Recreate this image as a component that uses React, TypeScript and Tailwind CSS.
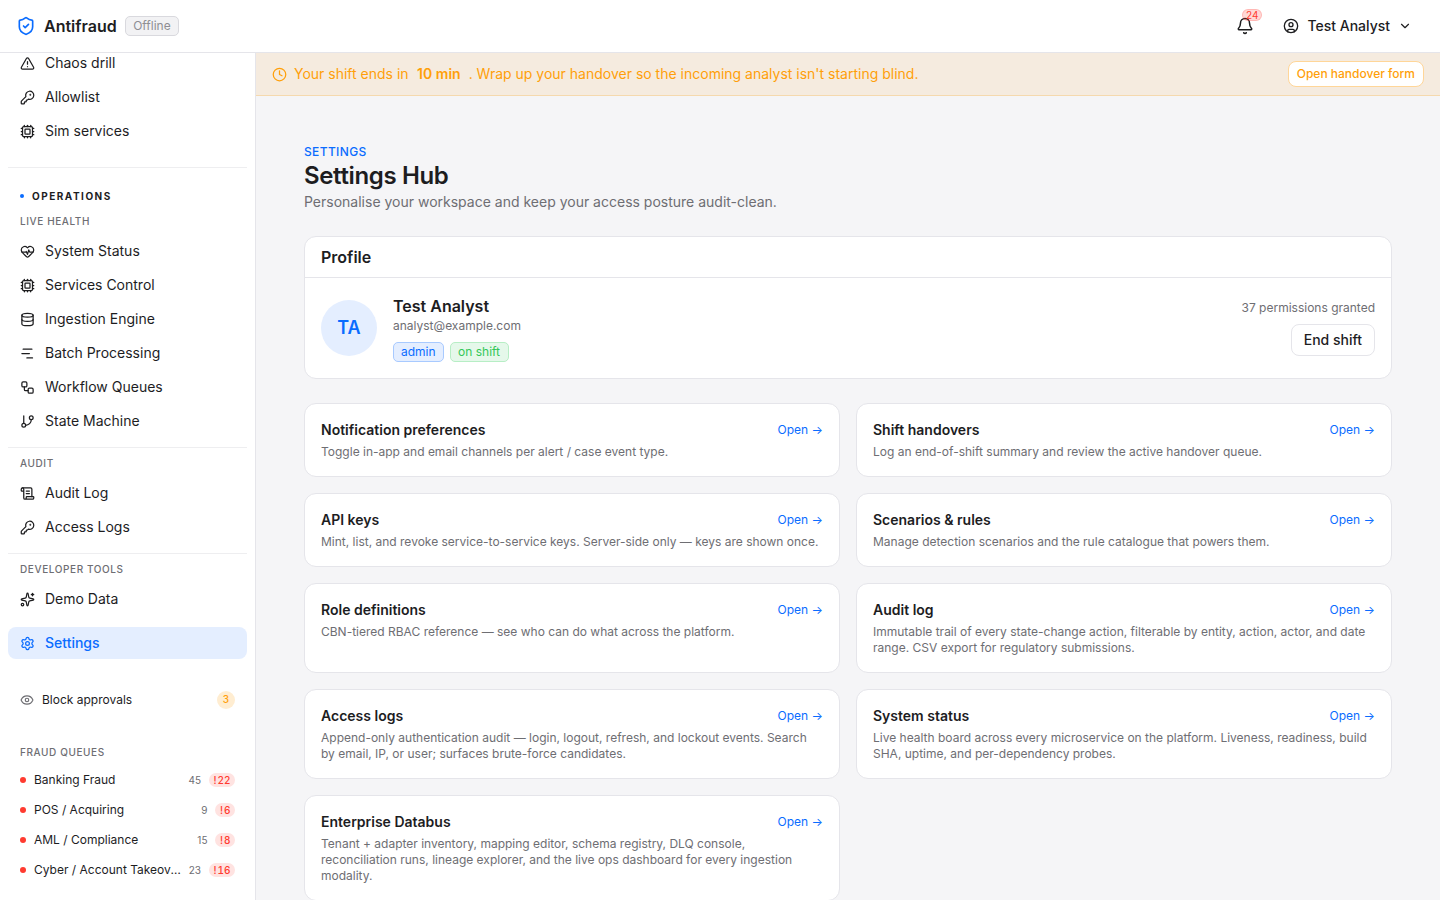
import {
  Bell,
  ChevronDown,
  CircleUser,
  Clock,
  Cpu,
  Database,
  Eye,
  GitBranch,
  HeartPulse,
  KeyRound,
  ScrollText,
  Settings,
  ShieldCheck,
  Sparkles,
  TriangleAlert,
  Workflow,
} from "lucide-react";
import type { ReactNode } from "react";

function NavItem({ icon, label }: { icon: ReactNode; label: string }) {
  return (
    <div className="flex h-[34px] items-center gap-[10px] px-3 text-sm text-[#1d1d1f]">
      <span className="flex w-[15px] justify-center text-[#1d1d1f]">{icon}</span>
      <span>{label}</span>
    </div>
  );
}

function BatchIcon() {
  return (
    <svg width="15" height="15" viewBox="0 0 24 24" fill="none" stroke="currentColor" strokeWidth="2" strokeLinecap="round">
      <path d="M5 5h14" />
      <path d="M3 12h12" />
      <path d="M11 19h9" />
    </svg>
  );
}

function GroupLabel({ children }: { children: ReactNode }) {
  return (
    <div className="px-3 text-[10px] font-medium uppercase leading-[14px] tracking-[0.06em] text-[#6e6e73]">
      {children}
    </div>
  );
}

function Queue({ name, total, hot }: { name: string; total: number; hot: number }) {
  return (
    <div className="flex h-[30px] items-center px-3">
      <span className="h-[6px] w-[6px] shrink-0 rounded-full bg-[#ff3b30]" />
      <span className="ml-2 min-w-0 flex-1 truncate text-xs text-[#1d1d1f]">{name}</span>
      <span className="ml-[7px] text-[10px] text-[#6e6e73]">{total}</span>
      <span className="ml-2 rounded-full bg-[#ffe3e1] px-[4.5px] text-[10px] font-medium leading-[14px] tabular-nums text-[#ff3b30]">
        <span className="mr-[1px]">!</span>
        {hot}
      </span>
    </div>
  );
}

function Sidebar() {
  return (
    <aside className="w-[256px] shrink-0 overflow-hidden border-r border-[#e5e5ea] bg-white">
      <div className="-mt-[7px] px-2">
        <NavItem icon={<TriangleAlert size={15} />} label="Chaos drill" />
        <NavItem icon={<KeyRound size={15} />} label="Allowlist" />
        <NavItem icon={<Cpu size={15} />} label="Sim services" />
        <div className="mt-[19px] border-t border-[#eeeef0]" />
        <div className="mt-[21px] flex items-center gap-2 px-3 text-[10px] font-bold leading-[14px] tracking-[0.15em] text-[#1d1d1f]">
          <span className="h-1 w-1 rounded-full bg-[#0a6cff]" />
          OPERATIONS
        </div>
        <div className="mt-[11px]">
          <GroupLabel>Live health</GroupLabel>
        </div>
        <div className="mt-[6px]">
          <NavItem icon={<HeartPulse size={15} />} label="System Status" />
          <NavItem icon={<Cpu size={15} />} label="Services Control" />
          <NavItem icon={<Database size={15} />} label="Ingestion Engine" />
          <NavItem icon={<BatchIcon />} label="Batch Processing" />
          <NavItem icon={<Workflow size={15} />} label="Workflow Queues" />
          <NavItem icon={<GitBranch size={15} />} label="State Machine" />
        </div>
        <div className="mt-[9px] border-t border-[#eeeef0]" />
        <div className="mt-2">
          <GroupLabel>Audit</GroupLabel>
        </div>
        <div className="mt-[6px]">
          <NavItem icon={<ScrollText size={15} />} label="Audit Log" />
          <NavItem icon={<KeyRound size={15} />} label="Access Logs" />
        </div>
        <div className="mt-[9px] border-t border-[#eeeef0]" />
        <div className="mt-2">
          <GroupLabel>Developer tools</GroupLabel>
        </div>
        <div className="mt-[6px]">
          <NavItem icon={<Sparkles size={15} />} label="Demo Data" />
        </div>
        <div className="mt-[11px] flex h-8 items-center gap-[10px] rounded-lg bg-[#e4eeff] px-3 text-sm font-medium text-[#0a6cff]">
          <Settings size={15} />
          Settings
        </div>
        <div className="mt-8 flex h-[18px] items-center gap-2 px-3 text-xs text-[#1d1d1f]">
          <Eye size={14} className="text-[#6e6e73]" />
          <span className="flex-1">Block approvals</span>
          <span className="flex h-[18px] w-[18px] items-center justify-center rounded-full bg-[#ffedd1] text-[10px] font-medium text-[#ff9f0a]">
            3
          </span>
        </div>
        <div className="mt-9">
          <GroupLabel>Fraud queues</GroupLabel>
        </div>
        <div className="mt-[6px]">
          <Queue name="Banking Fraud" total={45} hot={22} />
          <Queue name="POS / Acquiring" total={9} hot={6} />
          <Queue name="AML / Compliance" total={15} hot={8} />
          <Queue name="Cyber / Account Takeover" total={23} hot={16} />
        </div>
      </div>
    </aside>
  );
}

function HubCard({ title, body }: { title: string; body: string }) {
  return (
    <div className="rounded-xl border border-[#e5e5ea] bg-white p-4">
      <div className="flex items-center justify-between">
        <div className="text-sm font-semibold text-[#1d1d1f]">{title}</div>
        <div className="text-xs text-[#0a6cff]">Open →</div>
      </div>
      <p className="mt-1 text-xs text-[#6e6e73]">{body}</p>
    </div>
  );
}

export default function App() {
  return (
    <div className="flex h-screen flex-col overflow-hidden bg-[#f5f5f7] font-['Inter',sans-serif] text-[#1d1d1f] antialiased">
      <header className="flex h-[53px] shrink-0 items-center justify-between border-b border-[#e5e5ea] bg-white pl-4 pr-7">
        <div className="flex items-center">
          <ShieldCheck size={20} className="text-[#0a6cff]" />
          <span className="ml-2 text-base font-semibold">Antifraud</span>
          <span className="ml-2 rounded-[5px] border border-[#d9d9de] bg-[#f2f2f4] px-[7.5px] text-[12px] leading-[18px] text-[#8e8e93]">
            Offline
          </span>
        </div>
        <div className="flex items-center">
          <div className="relative">
            <Bell size={18} />
            <span className="absolute -right-[8px] -top-[8px] rounded-full border border-[#ff3b30]/20 bg-[#ff3b30]/20 px-[3px] text-[10px] leading-[10px] text-[#ff3b30]">
              24
            </span>
          </div>
          <CircleUser size={16} className="ml-[29px]" />
          <span className="ml-2 text-sm font-medium">Test Analyst</span>
          <ChevronDown size={14} className="ml-2" />
        </div>
      </header>
      <div className="flex min-h-0 flex-1">
        <Sidebar />
        <main className="min-w-0 flex-1 overflow-hidden">
          <div className="flex h-[43px] items-center border-b border-[#f5d9ae] bg-[#f5ebdf] px-4 text-sm text-[#ff9f0a]">
            <Clock size={15} />
            <span className="ml-[7px]">Your shift ends in</span>
            <span className="ml-[8.5px] font-semibold">10 min</span>
            <span className="ml-2">. Wrap up your handover so the incoming analyst isn't starting blind.</span>
            <span className="ml-auto rounded-lg border border-[#ffd699] bg-white px-2 py-[4px] text-xs font-medium">
              Open handover form
            </span>
          </div>
          <div className="px-12 pt-12">
            <div className="text-xs font-medium uppercase tracking-[0.03em] text-[#0a6cff]">Settings</div>
            <h1 className="text-2xl font-semibold tracking-[-0.015em]">Settings Hub</h1>
            <p className="text-sm text-[#6e6e73]">
              Personalise your workspace and keep your access posture audit-clean.
            </p>
            <section className="mt-6 rounded-xl border border-[#e5e5ea] bg-white">
              <div className="border-b border-[#e5e5ea] px-4 py-2 text-base font-semibold">Profile</div>
              <div className="flex items-center justify-between p-4">
                <div className="flex items-center gap-4">
                  <div className="flex h-14 w-14 items-center justify-center rounded-full bg-[#e4eeff] text-lg font-semibold text-[#0a6cff]">
                    TA
                  </div>
                  <div>
                    <div className="text-base font-semibold">Test Analyst</div>
                    <div className="text-xs text-[#6e6e73]">analyst@example.com</div>
                    <div className="mt-2 flex gap-[6px]">
                      <span className="rounded-[5px] border border-[#a8caff] bg-[#e4eeff] px-[7px] text-[12px] leading-[18px] text-[#0a6cff]">
                        admin
                      </span>
                      <span className="rounded-[5px] border border-[#b7eec5] bg-[#e5f8ea] px-[7.5px] text-[12px] leading-[18px] text-[#34c759]">
                        on shift
                      </span>
                    </div>
                  </div>
                </div>
                <div className="flex flex-col items-end">
                  <div className="text-xs text-[#6e6e73]">37 permissions granted</div>
                  <div className="mt-2 rounded-lg border border-[#e5e5ea] bg-white px-3 py-[5px] text-sm font-medium">
                    End shift
                  </div>
                </div>
              </div>
            </section>
            <div className="mt-6 grid grid-cols-2 gap-4">
              <HubCard title="Notification preferences" body="Toggle in-app and email channels per alert / case event type." />
              <HubCard title="Shift handovers" body="Log an end-of-shift summary and review the active handover queue." />
              <HubCard title="API keys" body="Mint, list, and revoke service-to-service keys. Server-side only — keys are shown once." />
              <HubCard title="Scenarios & rules" body="Manage detection scenarios and the rule catalogue that powers them." />
              <HubCard title="Role definitions" body="CBN-tiered RBAC reference — see who can do what across the platform." />
              <HubCard title="Audit log" body="Immutable trail of every state-change action, filterable by entity, action, actor, and date range. CSV export for regulatory submissions." />
              <HubCard title="Access logs" body="Append-only authentication audit — login, logout, refresh, and lockout events. Search by email, IP, or user; surfaces brute-force candidates." />
              <HubCard title="System status" body="Live health board across every microservice on the platform. Liveness, readiness, build SHA, uptime, and per-dependency probes." />
              <HubCard title="Enterprise Databus" body="Tenant + adapter inventory, mapping editor, schema registry, DLQ console, reconciliation runs, lineage explorer, and the live ops dashboard for every ingestion modality." />
            </div>
          </div>
        </main>
      </div>
    </div>
  );
}
